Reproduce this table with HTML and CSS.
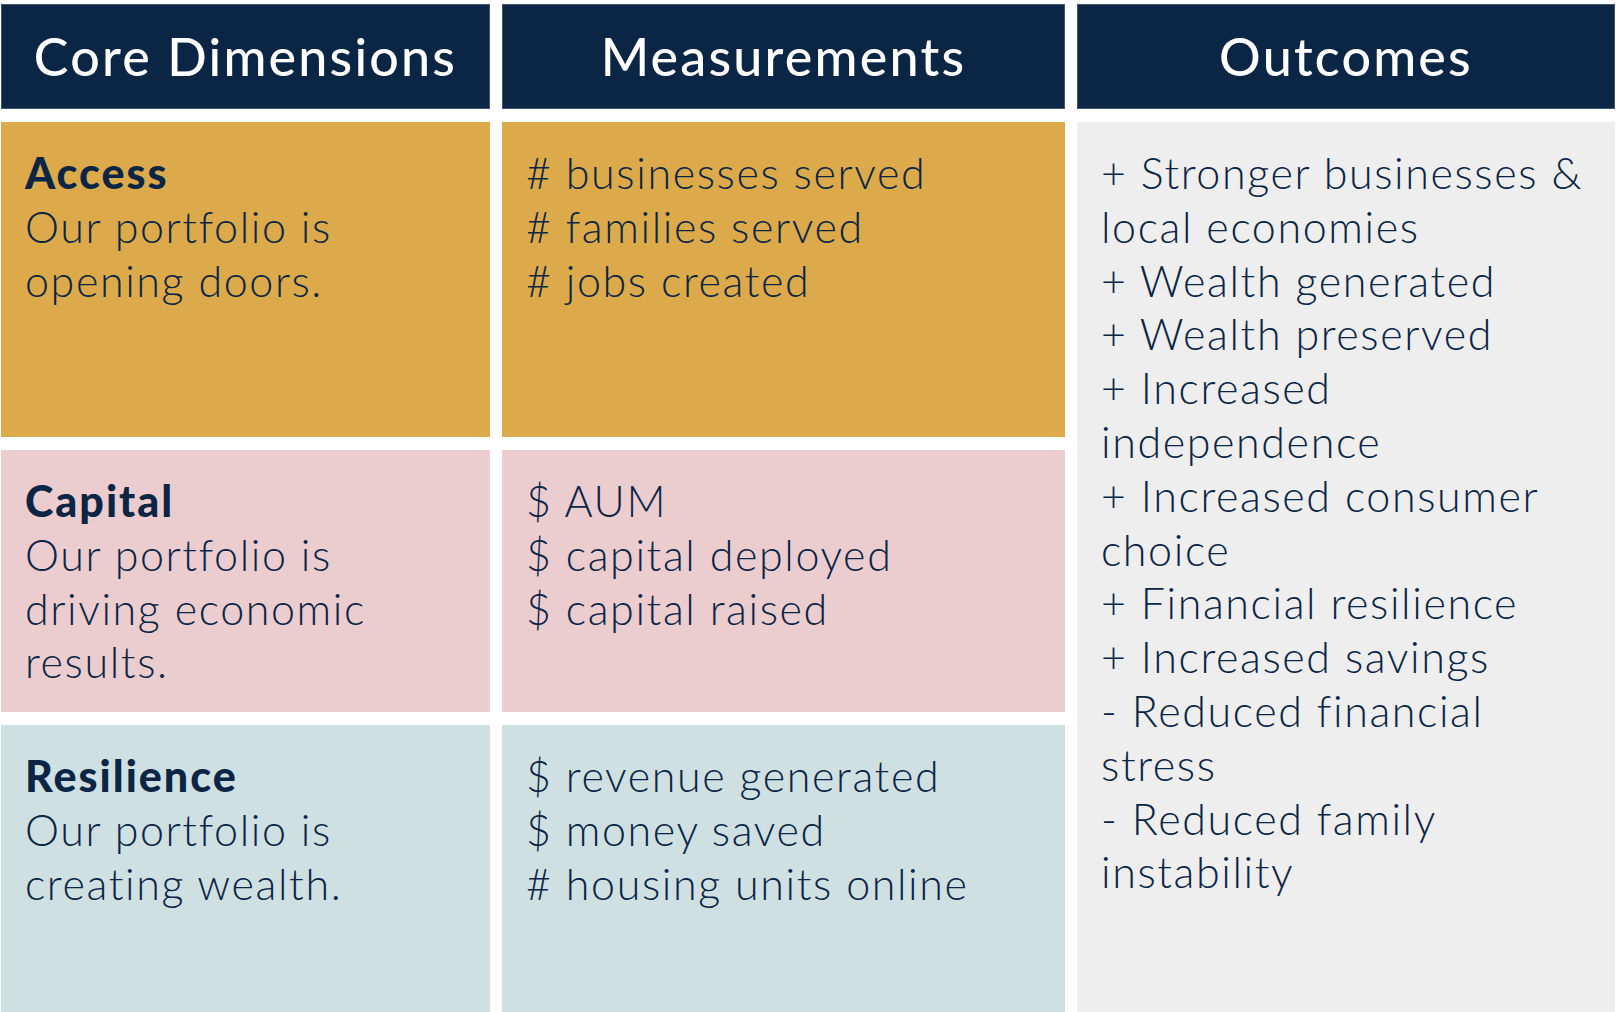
FILE: index.html
```html
<!DOCTYPE html>
<html lang="en">
<head>
<meta charset="utf-8">
<title>Impact Framework</title>
<link rel="stylesheet" href="styles.css">
</head>
<body>
<main class="grid">
  <div class="head">Core Dimensions</div>
  <div class="head">Measurements</div>
  <div class="head">Outcomes</div>

  <div class="cell gold">
    <p class="title">Access</p>
    <p>Our portfolio is<br>opening doors.</p>
  </div>
  <div class="cell gold">
    <p># businesses served</p>
    <p># families served</p>
    <p># jobs created</p>
  </div>
  <div class="cell gray outcomes">
    <p>+ Stronger businesses &amp; local economies</p>
    <p>+ Wealth generated</p>
    <p>+ Wealth preserved</p>
    <p>+ Increased independence</p>
    <p>+ Increased consumer choice</p>
    <p>+ Financial resilience</p>
    <p>+ Increased savings</p>
    <p>- Reduced financial stress</p>
    <p>- Reduced family instability</p>
  </div>

  <div class="cell pink">
    <p class="title">Capital</p>
    <p>Our portfolio is<br>driving economic<br>results.</p>
  </div>
  <div class="cell pink">
    <p>$ AUM</p>
    <p>$ capital deployed</p>
    <p>$ capital raised</p>
  </div>

  <div class="cell blue">
    <p class="title">Resilience</p>
    <p>Our portfolio is<br>creating wealth.</p>
  </div>
  <div class="cell blue">
    <p>$ revenue generated</p>
    <p>$ money saved</p>
    <p># housing units online</p>
  </div>
</main>
</body>
</html>
```

FILE: styles.css
```css
html, body {
  margin: 0;
  padding: 0;
  background: #ffffff;
}

body {
  width: 1620px;
  height: 1012px;
  overflow: hidden;
}

.grid {
  display: grid;
  grid-template-columns: 489px 563px 538px;
  grid-template-rows: 105px 315px 262px 288px;
  column-gap: 12px;
  row-gap: 13px;
  padding: 4px 0 0 1px;
  color: #0b2545;
  font-family: "Lato", "Liberation Sans", sans-serif;
}

.head {
  background: #0b2545;
  color: #ffffff;
  border: 1px solid #44566e;
  display: flex;
  align-items: center;
  justify-content: center;
  font-family: "Lato", "Liberation Sans", sans-serif;
  font-size: 52px;
  font-weight: 500;
  letter-spacing: 2.2px;
  padding-bottom: 2px;
}

.cell {
  padding: 24px 24px 0 24px;
  font-size: 43px;
  font-weight: 300;
  letter-spacing: 1.6px;
  line-height: 53.8px;
}

.cell p {
  margin: 0;
}

.cell .title {
  font-weight: 900;
  letter-spacing: 2px;
}

.gold { background: #dcaa4a; }
.pink { background: #ebcdcf; }
.blue { background: #cfe0e3; }
.gray { background: #eeeeee; }

.outcomes {
  grid-row: 2 / span 3;
  grid-column: 3;
}
```
